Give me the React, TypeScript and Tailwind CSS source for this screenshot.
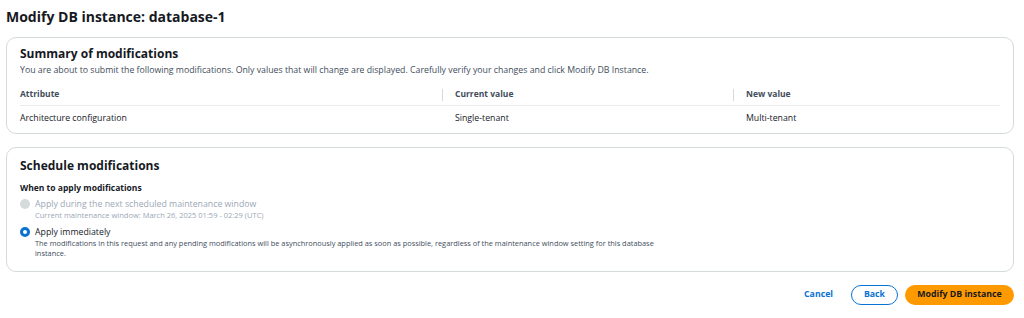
import React from 'react';

const font = { fontFamily: '"Open Sans", "Noto Sans", sans-serif' };

export default function App() {
  return (
    <div className="w-[1024px] h-[318px] bg-white text-[#16191f] overflow-hidden" style={font}>
      <div className="px-[6px] pt-[6px]">
        <h1 className="text-[14px] font-bold leading-[22px]">Modify DB instance: database-1</h1>

        {/* Summary */}
        <div className="mt-[9px] mr-[4px] border border-[#d5dbdb] rounded-[10px] pl-[13px] pr-[13px] pt-[7px] pb-[1px]">
          <h2 className="text-[12px] font-bold leading-[18px]">Summary of modifications</h2>
          <p className="text-[8.75px] leading-[12px] text-[#414d5c] mt-[1px]">
            You are about to submit the following modifications. Only values that will change are displayed. Carefully verify your changes and click Modify DB Instance.
          </p>
          <div className="mt-[8px] text-[8.75px]">
            <div className="flex h-[22px] items-center border-b border-[#e9ebed] text-[8.5px] font-bold text-[#414d5c]">
              <div className="w-[422px]">Attribute</div>
              <div className="w-[291px] flex items-center"><span className="h-[12px] w-px bg-[#d5dbdb] mr-[12px]" />Current value</div>
              <div className="flex-1 flex items-center"><span className="h-[12px] w-px bg-[#d5dbdb] mr-[12px]" />New value</div>
            </div>
            <div className="flex h-[26px] items-center text-[#16191f]">
              <div className="w-[422px]">Architecture configuration</div>
              <div className="w-[291px] pl-[13px]">Single-tenant</div>
              <div className="flex-1 pl-[13px]">Multi-tenant</div>
            </div>
          </div>
        </div>

        {/* Schedule */}
        <div className="mt-[13px] mr-[4px] border border-[#d5dbdb] rounded-[10px] pl-[13px] pr-[13px] pt-[9px] pb-[13px]">
          <h2 className="text-[12px] font-bold leading-[18px]">Schedule modifications</h2>
          <div className="mt-[7px] text-[8.5px] font-bold leading-[12px]">When to apply modifications</div>
          <div className="mt-[4px] flex gap-[5px]">
            <span className="mt-[1px] w-[10px] h-[10px] rounded-full bg-[#d5dbdb] shrink-0" />
            <div>
              <div className="text-[8.75px] leading-[12px] text-[#9ba7b6]">Apply during the next scheduled maintenance window</div>
              <div className="text-[7.5px] leading-[10px] text-[#9ba7b6]">Current maintenance window: March 26, 2025 01:59 - 02:29 (UTC)</div>
            </div>
          </div>
          <div className="mt-[6px] flex gap-[5px]">
            <span className="mt-[1px] w-[10px] h-[10px] rounded-full border-[3px] border-[#0972d3] bg-white shrink-0" />
            <div>
              <div className="text-[8.75px] leading-[12px] text-[#16191f]">Apply immediately</div>
              <div className="text-[7.4px] leading-[10px] text-[#414d5c] w-[650px]">
                The modifications in this request and any pending modifications will be asynchronously applied as soon as possible, regardless of the maintenance window setting for this database instance.
              </div>
            </div>
          </div>
        </div>

        {/* Actions */}
        <div className="mt-[13px] flex items-center justify-end gap-[7px] pr-[4px] text-[8.75px] font-bold">
          <button className="text-[#0972d3] px-[11px] h-[20px]">Cancel</button>
          <button className="text-[#0972d3] border border-[#0972d3] rounded-full w-[47px] h-[20px]">Back</button>
          <button className="bg-[#ff9900] text-[#16191f] rounded-full w-[109px] h-[20px]">Modify DB instance</button>
        </div>
      </div>
    </div>
  );
}
